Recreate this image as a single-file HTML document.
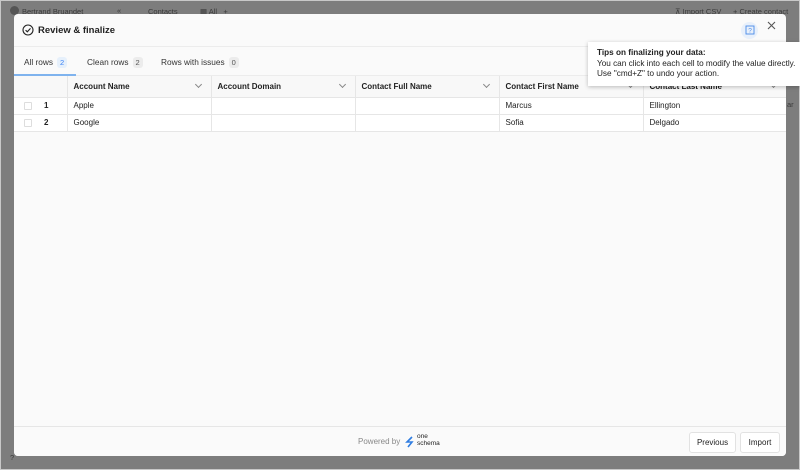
<!DOCTYPE html>
<html><head><style>
*{box-sizing:border-box;margin:0;padding:0}
body{width:800px;height:470px;background:#7d7d7d;font-family:"Liberation Sans",sans-serif;position:relative;overflow:hidden;font-size:8px;color:#222}
.frame{position:absolute;left:0;top:0;width:800px;height:470px;border:1px solid #c8c8c8}
.bg{position:absolute;color:#3a3a3a;font-size:7.5px}
.modal{position:absolute;left:14px;top:14px;width:772px;height:442px;background:#fafafa;border-radius:4px;overflow:hidden}
.hdr{height:33px;border-bottom:1px solid #ececec;position:relative}
.title{position:absolute;left:24px;top:11px;font-size:9.5px;font-weight:bold;color:#222}
.tabs{height:29px;position:relative;border-bottom:1px solid #ececec}
.tab{position:absolute;top:10px;font-size:8.3px;color:#333}
.badge{display:inline-block;background:#ececec;border-radius:3px;padding:1px 3px;margin-left:4px;font-size:7.5px;color:#555}
.tab.act .badge{background:#e6f0fb;color:#3b82f6}
.ul{position:absolute;left:0;top:27px;width:62px;height:2px;background:#7fb3ee}
table{border-collapse:collapse;position:absolute;left:0;top:62px;width:772px;table-layout:fixed;background:#fff}
td{border-right:1px solid #e6e6e6;border-bottom:1px solid #e6e6e6;height:17px;padding-left:6px;font-size:8px;color:#222;white-space:nowrap;overflow:hidden}
tr.h td{height:21px;background:#f8f8f8;font-weight:bold;position:relative}
.chev{position:absolute;right:10px;top:6px;width:5px;height:5px;border-right:1px solid #888;border-bottom:1px solid #888;transform:rotate(45deg)}
.cb{display:inline-block;width:8px;height:8px;border:1px solid #ddd;border-radius:1px;vertical-align:middle;margin-left:10px}
.foot{position:absolute;left:0;top:412px;width:772px;height:30px;border-top:1px solid #e6e6e6;background:#fafafa}
.btn{position:absolute;top:5px;height:21px;border:1px solid #e2e2e2;border-radius:3px;background:#fff;font-size:8px;line-height:19px;text-align:center;color:#222}
.tip{position:absolute;left:588px;top:42px;width:212px;height:44px;background:#fff;box-shadow:0 1px 4px rgba(0,0,0,.25);padding:6px 0 0 9px;font-size:8.2px;line-height:10.5px;color:#222;white-space:nowrap}
</style></head><body>
<div class="frame"></div>
<div class="bg" style="left:22px;top:7px">Bertrand Bruandet</div>
<div class="bg" style="left:10px;top:6px;width:9px;height:9px;border-radius:50%;background:#555"></div>
<div class="bg" style="left:117px;top:6px">«</div>
<div class="bg" style="left:148px;top:7px">Contacts</div>
<div class="bg" style="left:200px;top:7px">▦ All &nbsp; +</div>
<div class="bg" style="left:675px;top:7px">⊼ Import CSV</div>
<div class="bg" style="left:733px;top:7px">+ Create contact</div>
<div class="bg" style="left:787px;top:100px">ar</div>
<div class="bg" style="left:10px;top:453px">?</div>
<div class="modal">
 <div class="hdr">
  <svg style="position:absolute;left:8px;top:10px" width="12" height="12" viewBox="0 0 12 12"><circle cx="6" cy="6" r="5" fill="none" stroke="#222" stroke-width="1.1"/><path d="M3.6 6.2l1.7 1.6 3.2-3.4" fill="none" stroke="#222" stroke-width="1.1"/></svg>
  <div class="title">Review &amp; finalize</div>
  <div style="position:absolute;left:727px;top:8px;width:17px;height:17px;border-radius:50%;background:#e8f0fb"></div>
  <svg style="position:absolute;left:731px;top:11px" width="10" height="11" viewBox="0 0 10 11"><rect x="1" y="1" width="8" height="8" fill="none" stroke="#4a8ae8" stroke-width=".9"/><text x="5" y="7.5" font-size="6.5" text-anchor="middle" fill="#4a8ae8" font-family="Liberation Sans">?</text></svg>
  <svg style="position:absolute;left:753px;top:7px" width="9" height="9" viewBox="0 0 9 9"><path d="M1 1l7 7M8 1l-7 7" stroke="#555" stroke-width="1.1"/></svg>
 </div>
 <div class="tabs">
  <div class="tab act" style="left:10px">All rows<span class="badge">2</span></div>
  <div class="tab" style="left:73px">Clean rows<span class="badge">2</span></div>
  <div class="tab" style="left:147px">Rows with issues<span class="badge">0</span></div>
  <div class="ul"></div>
 </div>
 <table>
  <colgroup><col style="width:53px"><col style="width:144px"><col style="width:144px"><col style="width:144px"><col style="width:144px"><col style="width:143px"></colgroup>
  <tr class="h"><td></td><td>Account Name<span class="chev"></span></td><td>Account Domain<span class="chev"></span></td><td>Contact Full Name<span class="chev"></span></td><td>Contact First Name<span class="chev"></span></td><td>Contact Last Name<span class="chev"></span></td></tr>
  <tr><td style="padding:0"><span class="cb"></span><b style="margin-left:12px">1</b></td><td>Apple</td><td></td><td></td><td>Marcus</td><td>Ellington</td></tr>
  <tr><td style="padding:0"><span class="cb"></span><b style="margin-left:12px">2</b></td><td>Google</td><td></td><td></td><td>Sofia</td><td>Delgado</td></tr>
 </table>
 <div class="foot">
  <div style="position:absolute;left:344px;top:10px;font-size:8px;color:#888">Powered by</div>
  <svg style="position:absolute;left:391px;top:9px" width="10" height="12" viewBox="0 0 10 12"><path d="M7 1L2 6h5L3 11" fill="none" stroke="#2f7de1" stroke-width="1.6"/></svg>
  <div style="position:absolute;left:403px;top:7px;font-size:6.5px;line-height:6.5px;color:#222">one<br>schema</div>
  <div class="btn" style="left:675px;width:47px">Previous</div>
  <div class="btn" style="left:726px;width:40px">Import</div>
 </div>
</div>
<div class="tip"><b>Tips on finalizing your data:</b><br>You can click into each cell to modify the value directly.<br>Use "cmd+Z" to undo your action.</div>
</body></html>
